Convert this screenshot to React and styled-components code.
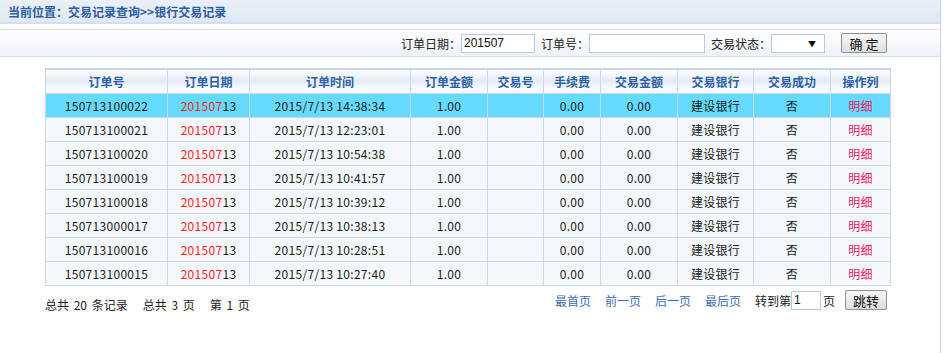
import React from "react";
import styled, { createGlobalStyle } from "styled-components";

const Global = createGlobalStyle`
  html, body { margin: 0; padding: 0; background: #fff; }
  body { font-family: "Noto Sans CJK SC", "Noto Sans", sans-serif; font-size: 12px; color: #222; }
`;

const Page = styled.div`
  width: 940px;
  min-height: 353px;
  border-right: 1px solid #c9d8ea;
  box-sizing: content-box;
`;

const TopBar = styled.div`
  height: 22px;
  border-bottom: 2px solid #d3deee;
  background: linear-gradient(#eaf0f9, #dfe8f4);
  display: flex;
  align-items: center;
  padding-left: 8px;
  font-weight: bold;
  color: #2d5d9f;
  font-size: 12px;
`;

const FilterBar = styled.div`
  margin-top: 5px;
  height: 26px;
  border-top: 1px solid #dce5f0;
  border-bottom: 1px solid #d7e1ed;
  background: linear-gradient(#ffffff, #edf2f9);
  display: flex;
  align-items: center;
  justify-content: flex-end;
  padding-right: 53px;
  font-size: 12px;
  color: #222;
`;

const Label = styled.span`
  margin-left: ${(p) => p.$ml || 0}px;
`;

const TextInput = styled.div`
  box-sizing: border-box;
  width: ${(p) => p.$w}px;
  height: ${(p) => p.$h || 19}px;
  border: 1px solid #b3cbe6;
  background: #fff;
  font-family: "Liberation Sans", Arial, sans-serif;
  font-size: 12px;
  line-height: ${(p) => (p.$h || 19) - 2}px;
  padding-left: 2px;
  color: #111;
  margin-left: ${(p) => p.$ml || 0}px;
`;

const SelectBox = styled.div`
  box-sizing: border-box;
  width: 54px;
  height: 19px;
  border: 1px solid #b3cbe6;
  background: #fff;
  display: flex;
  align-items: center;
  justify-content: flex-end;
  padding-right: 8px;
  font-size: 8px;
  color: #111;
`;

const Button = styled.div`
  box-sizing: border-box;
  height: 20px;
  width: ${(p) => p.$w}px;
  margin-left: ${(p) => p.$ml || 0}px;
  border: 1px solid #8f8f8f;
  border-radius: 2px;
  background: linear-gradient(#f7f7f7, #dedede);
  display: flex;
  align-items: center;
  justify-content: center;
  font-size: 13px;
  color: #111;
`;

const Content = styled.div`
  padding: 11px 0 0 45px;
`;

const Table = styled.table`
  border-collapse: collapse;
  width: 845px;
  table-layout: fixed;
  border-top: 2px solid #c5d7ec;
`;

const Th = styled.th`
  height: 23px;
  padding: 0;
  border: 1px solid #c8d9ee;
  border-top: none;
  background: linear-gradient(#ffffff 0%, #e4ebf5 45%, #f3f6fb 70%, #ffffff 100%);
  color: #2c5fa5;
  font-weight: bold;
  font-size: 12px;
  text-align: center;
`;

const Tr = styled.tr`
  background: ${(p) => (p.$active ? "#66dafd" : "#f4f8fd")};
`;

const Td = styled.td`
  height: 23px;
  padding: 0;
  border: 1px solid #c8d9ee;
  text-align: center;
  font-size: 12px;
  letter-spacing: 0.3px;
  color: #1a1a1a;
`;

const Red = styled.span`
  color: #ff1a1a;
`;

const Link = styled.span`
  color: #f0186a;
`;

const Footer = styled.div`
  display: flex;
  align-items: center;
  width: 842px;
  height: 20px;
  margin-top: 4px;
  font-size: 12px;
`;

const Summary = styled.div`
  flex: 1;
  display: flex;
  gap: 15px;
  padding-top: 6px;
  align-self: flex-start;
  word-spacing: 2px;
`;

const Pager = styled.div`
  display: flex;
  align-items: center;
`;

const PageLink = styled.span`
  color: #3b6cb3;
  margin-right: 14px;
`;

const cols = [122, 82, 161, 77, 56, 57, 77, 76, 77, 60];
const heads = ["订单号", "订单日期", "订单时间", "订单金额", "交易号", "手续费", "交易金额", "交易银行", "交易成功", "操作列"];

const rows = [
  ["150713100022", "14:38:34"],
  ["150713100021", "12:23:01"],
  ["150713100020", "10:54:38"],
  ["150713100019", "10:41:57"],
  ["150713100018", "10:39:12"],
  ["150713000017", "10:38:13"],
  ["150713100016", "10:28:51"],
  ["150713100015", "10:27:40"],
];

export default function App() {
  return (
    <Page>
      <Global />
      <TopBar>当前位置：交易记录查询&gt;&gt;银行交易记录</TopBar>
      <FilterBar>
        <Label>订单日期：</Label>
        <TextInput $w={74}>201507</TextInput>
        <Label $ml={6}>订单号：</Label>
        <TextInput $w={116}></TextInput>
        <Label $ml={6}>交易状态：</Label>
        <SelectBox>▼</SelectBox>
        <Button $w={46} $ml={16}>确 定</Button>
      </FilterBar>
      <Content>
        <Table>
          <colgroup>
            {cols.map((w, i) => (
              <col key={i} style={{ width: w }} />
            ))}
          </colgroup>
          <thead>
            <tr>
              {heads.map((h) => (
                <Th key={h}>{h}</Th>
              ))}
            </tr>
          </thead>
          <tbody>
            {rows.map(([id, t], i) => (
              <Tr key={id} $active={i === 0}>
                <Td>{id}</Td>
                <Td>
                  <Red>201507</Red>13
                </Td>
                <Td>2015/7/13 {t}</Td>
                <Td>1.00</Td>
                <Td></Td>
                <Td>0.00</Td>
                <Td>0.00</Td>
                <Td>建设银行</Td>
                <Td>否</Td>
                <Td>
                  <Link>明细</Link>
                </Td>
              </Tr>
            ))}
          </tbody>
        </Table>
        <Footer>
          <Summary>
            <span>总共 20 条记录</span>
            <span>总共 3 页</span>
            <span>第 1 页</span>
          </Summary>
          <Pager>
            <PageLink>最首页</PageLink>
            <PageLink>前一页</PageLink>
            <PageLink>后一页</PageLink>
            <PageLink>最后页</PageLink>
            <span>转到第</span>
            <TextInput $w={30} $h={19}>1</TextInput>
            <Label $ml={2}>页</Label>
            <Button $w={42} $ml={10}>跳转</Button>
          </Pager>
        </Footer>
      </Content>
    </Page>
  );
}
